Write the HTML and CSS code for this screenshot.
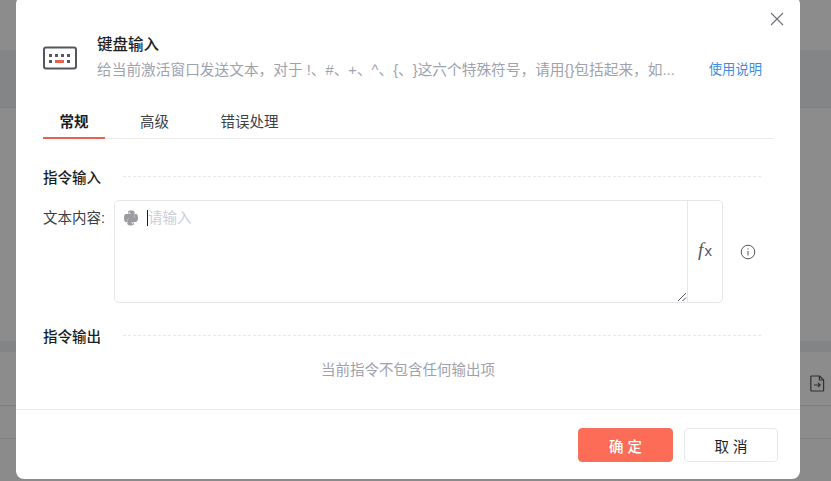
FILE: index.html
```html
<!DOCTYPE html>
<html lang="zh-CN">
<head>
  <meta charset="UTF-8" />
  <title>键盘输入</title>
  <link rel="stylesheet" href="styles.css">
</head>
<body>
  <div class="backdrop">
    <div class="band band-top"></div>
    <div class="band band-head"></div>
    <div class="band band-body"></div>
    <div class="band band-head2"></div>
    <div class="band band-row">
      <svg class="file-icon" width="15" height="17" viewBox="0 0 15 17" fill="none" stroke="#2f3136" stroke-width="1.2">
        <path d="M1.6 1h8l4 4v10.2a.8.8 0 0 1-.8.8H1.6a.8.8 0 0 1-.8-.8V1.8a.8.8 0 0 1 .8-.8z" />
        <path d="M9.4 1v4h4" />
        <path d="M4 10h6M8 7.8l2.2 2.2L8 12.2" />
      </svg>
    </div>
    <div class="band band-row2"></div>
  </div>

  <div class="modal">
    <button class="close" aria-label="close">
      <svg width="14" height="14" viewBox="0 0 14 14" stroke="#6b6e76" stroke-width="1.1" fill="none">
        <path d="M1 1l12 12M13 1L1 13" />
      </svg>
    </button>

    <div class="modal-head">
      <svg class="kb-icon" width="34" height="24" viewBox="0 0 34 24" fill="none">
        <rect x="1" y="1.5" width="32" height="21" rx="2" stroke="#55565e" stroke-width="2" />
        <g fill="#55565e">
          <rect x="6" y="8" width="3" height="3" />
          <rect x="12" y="8" width="3" height="3" />
          <rect x="18" y="8" width="3" height="3" />
          <rect x="24" y="8" width="3" height="3" />
          <rect x="6" y="14" width="3" height="3" />
          <rect x="24" y="14" width="3" height="3" />
        </g>
        <rect x="12" y="14" width="9" height="3" fill="#e8604f" />
      </svg>
      <div class="head-text">
        <div class="title">键盘输入</div>
        <div class="desc">给当前激活窗口发送文本，对于 !、#、+、^、{、}这六个特殊符号，请用{}包括起来，如...</div>
      </div>
      <a class="help" href="#">使用说明</a>
    </div>

    <div class="tabs">
      <div class="tab active">常规</div>
      <div class="tab">高级</div>
      <div class="tab">错误处理</div>
    </div>

    <div class="section-title"><span>指令输入</span><i></i></div>

    <div class="field">
      <label>文本内容:</label>
      <div class="input-box">
        <div class="input-area">
          <svg class="py-icon" width="16" height="16" viewBox="0 0 16 16" fill="#9b9ca1">
            <path d="M7.9.6C4.8.6 5 2 5 2v1.5h3v.5H3.4S1 3.700 1 7.900s2.100 4 2.100 4h1.300v-1.900s-.1-2.100 2.100-2.100h3.100s2 0 2-2V2.600S12 .6 7.900.6zM6.200 1.700a.6.600 0 1 1 0 1.200.6.600 0 0 1 0-1.200z" />
            <path d="M8.100 15.400c3.100 0 2.900-1.400 2.900-1.400v-1.500H8V12h4.600s2.400.3 2.400-3.900-2.100-4-2.100-4h-1.300v1.900s.1 2.100-2.100 2.100H6.400s-2 0-2 2v3.300S4 15.400 8.100 15.400zm1.700-1.100a.6.600 0 1 1 0-1.200.6.600 0 0 1 0 1.200z" />
          </svg>
          <span class="caret"></span>
          <span class="placeholder">请输入</span>
          <svg class="resize" width="10" height="10" viewBox="0 0 10 10" stroke="#55565e" stroke-width="1" fill="none">
            <path d="M1 9l8-8M5.500 9L9 5.500" />
          </svg>
        </div>
        <div class="fx"><span class="fx-f">f</span><span class="fx-x">x</span></div>
      </div>
      <svg class="info" width="16" height="16" viewBox="0 0 16 16" fill="none" stroke="#55565e" stroke-width="1">
        <circle cx="8" cy="8" r="6.800" />
        <path d="M8 7v4.500M8 4.300v1.200" />
      </svg>
    </div>

    <div class="section-title output"><span>指令输出</span><i></i></div>
    <div class="empty">当前指令不包含任何输出项</div>

    <div class="modal-foot">
      <button class="btn primary">确 定</button>
      <button class="btn">取 消</button>
    </div>
  </div>
</body>
</html>
```

FILE: styles.css
```css
* {
  box-sizing: border-box;
}

html, body {
  margin: 0;
  height: 100%;
  overflow: hidden;
}

body {
  font-family: "Liberation Sans", "Noto Sans CJK SC", sans-serif;
  background-color: #8b8b8b;
  color: #1c1e24;
  font-size: 14.5px;
  text-spacing-trim: space-all;
}

.backdrop {
  height: 481px;
}

.band {
  border-bottom: 1px solid #7f8083;
}

.band-top { height: 50px; background: #8c8c8c; border: 0; }
.band-head { height: 58px; background: #848586; }
.band-body { height: 233px; background: #8c8c8c; border: 0; }
.band-head2 { height: 11px; background: #838485; border: 0; }
.band-row { height: 54px; background: #8c8c8c; display: flex; justify-content: flex-end; align-items: center; padding-right: 6px; }
.band-row2 { height: 33px; background: #8c8c8c; }

.file-icon {
  margin-top: 10px;
}

.modal {
  position: absolute;
  left: 16px;
  top: -4px;
  width: 784px;
  height: 483px;
  background: #fff;
  border-radius: 8px;
  display: flex;
  flex-direction: column;
}

.close {
  position: absolute;
  top: 16px;
  right: 16px;
  width: 14px;
  height: 14px;
  padding: 0;
  border: 0;
  background: none;
  display: flex;
}

.modal-head {
  display: flex;
  align-items: center;
  margin-top: 39px;
  padding: 0 38px 0 27px;
  height: 44px;
}

.kb-icon {
  flex: none;
  margin-right: 20px;
  margin-top: 2px;
}

.head-text {
  flex: 1;
  min-width: 0;
}

.title {
  font-size: 15.5px;
  font-weight: 500;
  line-height: 20px;
  margin-bottom: 5px;
}

.desc {
  color: #9ea2ae;
  font-size: 14.7px;
  line-height: 20px;
  white-space: nowrap;
  overflow: hidden;
}

.help {
  flex: none;
  color: #3c8ce0;
  font-size: 13.3px;
  text-decoration: none;
  margin-left: 32px;
  margin-top: 22px;
}

.tabs {
  display: flex;
  margin: 22px 27px 0;
  height: 38px;
  border-bottom: 1px solid #ebebeb;
}

.tab {
  padding: 0 16.5px;
  margin-right: 18.5px;
  line-height: 42px;
  color: #3c3f47;
}

.tab.active {
  color: #1c1e24;
  font-weight: 700;
  height: 38px;
  border-bottom: 2px solid #e8604f;
}

.section-title {
  display: flex;
  align-items: center;
  margin: 27px 39px 0 27px;
  height: 20px;
  font-weight: 500;
}

.section-title i {
  flex: 1;
  margin-left: 22px;
  border-top: 1px dashed #e8e8ea;
}

.field {
  display: flex;
  margin: 14px 0 0 27px;
}

.field label {
  width: 71px;
  flex: none;
  line-height: 20px;
  margin-top: 8px;
  color: #3c3f47;
}

.input-box {
  width: 609px;
  height: 103px;
  border: 1px solid #e6e7ea;
  border-radius: 5px;
  display: flex;
}

.input-area {
  position: relative;
  flex: 1;
  display: flex;
  align-items: flex-start;
  padding: 9px 0 0 8px;
  border-right: 1px solid #e6e7ea;
}

.py-icon {
  flex: none;
}

.caret {
  width: 1px;
  height: 16px;
  background: #1c1e24;
  margin: 0 0 0 8px;
}

.placeholder {
  color: #ccced4;
  line-height: 16px;
}

.resize {
  position: absolute;
  right: 0;
  bottom: 0;
}

.fx {
  width: 34px;
  flex: none;
  display: flex;
  align-items: baseline;
  justify-content: center;
  padding-top: 39px;
  line-height: 20px;
  color: #55565e;
}

.fx-f {
  font-family: "Liberation Serif", serif;
  font-style: italic;
  font-size: 19px;
}

.fx-x {
  font-family: "Liberation Sans", sans-serif;
  font-size: 15px;
  margin-left: 1px;
}

.info {
  margin: 44px 0 0 17px;
}

.section-title.output {
  margin-top: 22px;
}

.empty {
  margin-top: 15px;
  text-align: center;
  color: #9ea2ae;
  line-height: 20px;
}

.modal-foot {
  margin-top: auto;
  height: 70px;
  border-top: 1px solid #ebebeb;
  display: flex;
  justify-content: flex-end;
  align-items: flex-start;
  gap: 11px;
  padding: 18px 22px 0 0;
}

.btn {
  width: 94px;
  height: 34px;
  border: 1px solid #e8e8ea;
  border-radius: 4px;
  background: #fff;
  color: #1c1e24;
  font-family: inherit;
  font-size: 14.5px;
}

.btn.primary {
  width: 95px;
  background: #fc6c57;
  border-color: #f6715c;
  color: #fff;
  font-weight: 500;
}
```
